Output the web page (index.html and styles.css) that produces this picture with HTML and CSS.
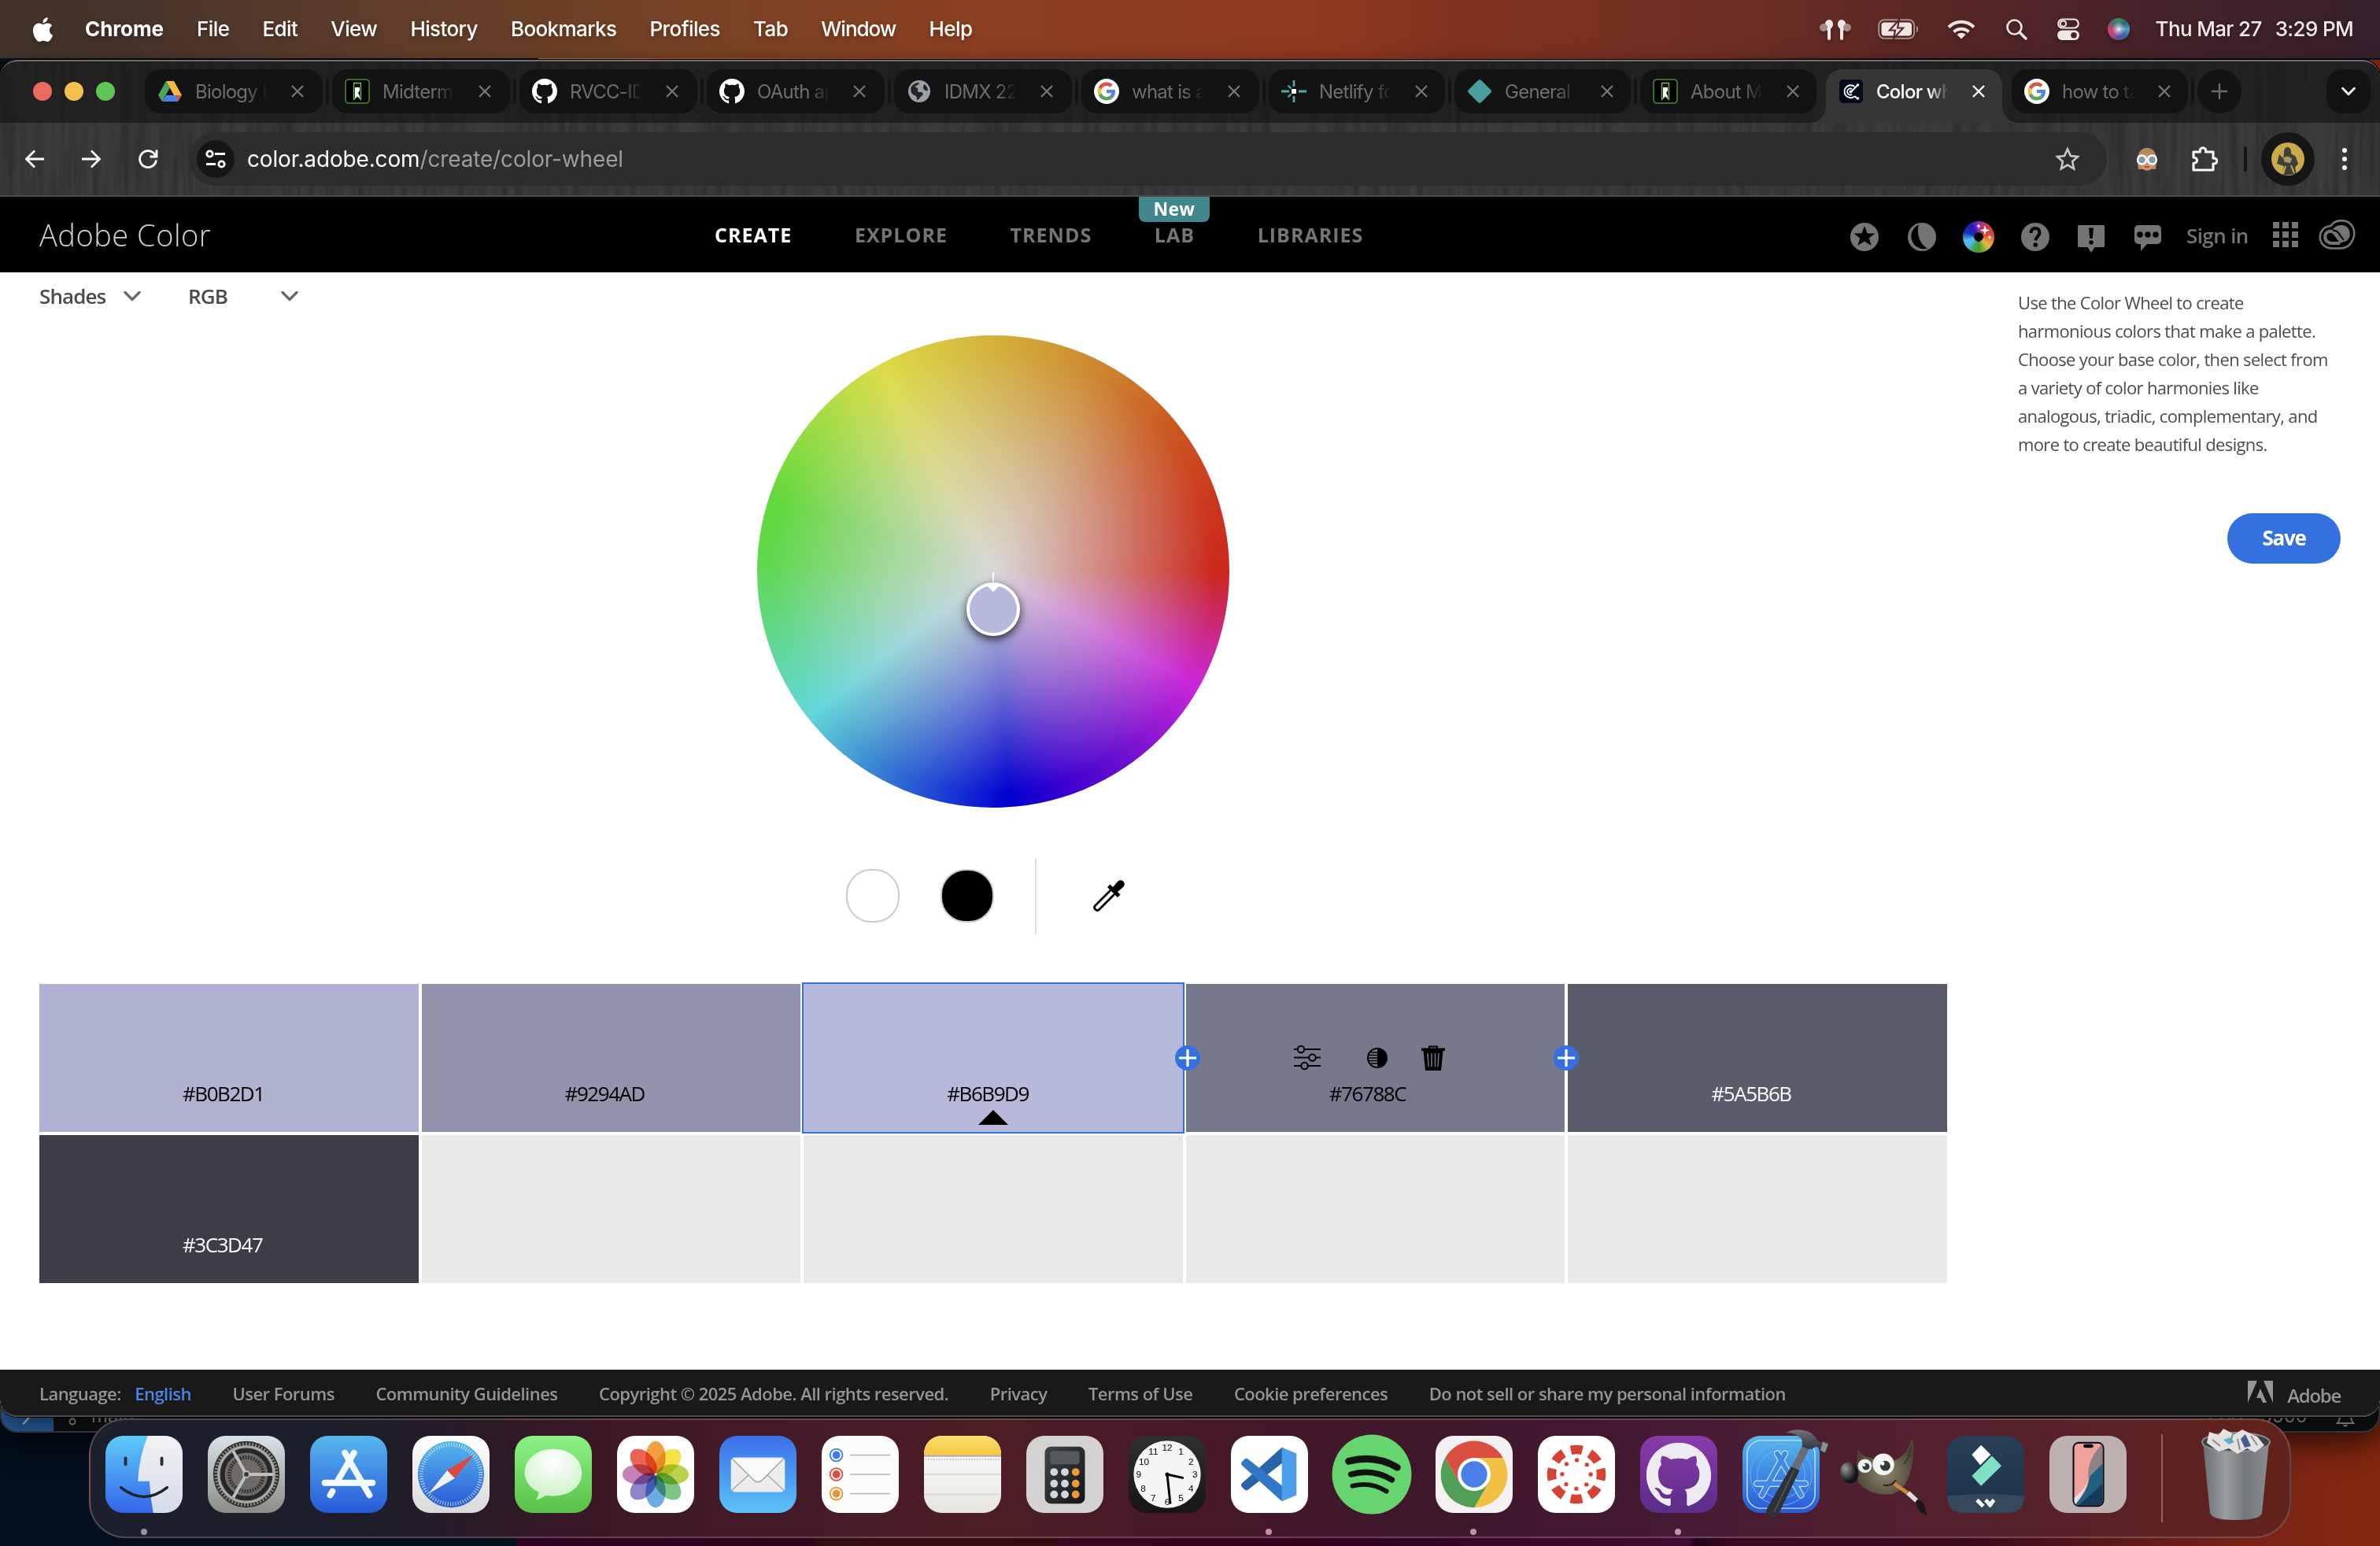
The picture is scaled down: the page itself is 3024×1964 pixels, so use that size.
FILE: index.html
```html
<!DOCTYPE html>
<html lang="en">
<head>
<meta charset="utf-8">
<title>Color wheel, a color palette generator | Adobe Color</title>
<link rel="stylesheet" href="styles.css">
</head>
<body>
<svg class="defs" width="0" height="0" aria-hidden="true">
  <defs>
    <filter id="grain" x="0" y="0" width="100%" height="100%">
      <feTurbulence type="fractalNoise" baseFrequency="0.11 0.006" numOctaves="3" seed="8"/>
      <feColorMatrix type="matrix" values="0 0 0 0 0  0 0 0 0 0  0 0 0 0 0  1.5 0 0 0 -0.55"/>
    </filter>
    <linearGradient id="gFinder" x1="0" y1="0" x2="0" y2="1"><stop offset="0" stop-color="#5ecbf9"/><stop offset="1" stop-color="#3265ea"/></linearGradient>
    <linearGradient id="gFace" x1="0" y1="0" x2="0" y2="1"><stop offset="0" stop-color="#f3f1f3"/><stop offset="1" stop-color="#d3dce8"/></linearGradient>
    <linearGradient id="gGear" x1="0" y1="0" x2="0" y2="1"><stop offset="0" stop-color="#d8e3e9"/><stop offset="1" stop-color="#8d8b85"/></linearGradient>
    <linearGradient id="gBlue" x1="0" y1="0" x2="0" y2="1"><stop offset="0" stop-color="#57b8ee"/><stop offset="1" stop-color="#2858d8"/></linearGradient>
    <linearGradient id="gMail" x1="0" y1="0" x2="0" y2="1"><stop offset="0" stop-color="#3a6fea"/><stop offset="1" stop-color="#5cc1f7"/></linearGradient>
    <linearGradient id="gGreen" x1="0" y1="0" x2="0" y2="1"><stop offset="0" stop-color="#8bf385"/><stop offset="1" stop-color="#58c147"/></linearGradient>
    <linearGradient id="gWhite" x1="0" y1="0" x2="0" y2="1"><stop offset="0" stop-color="#ffffff"/><stop offset="1" stop-color="#d9d9d9"/></linearGradient>
    <linearGradient id="gPaper" x1="0" y1="0" x2="0" y2="1"><stop offset="0" stop-color="#ffffff"/><stop offset="1" stop-color="#e5e4df"/></linearGradient>
    <linearGradient id="gYellow" x1="0" y1="0" x2="0" y2="1"><stop offset="0" stop-color="#fbdf71"/><stop offset="1" stop-color="#f6c53e"/></linearGradient>
    <linearGradient id="gDark" x1="0" y1="0" x2="0" y2="1"><stop offset="0" stop-color="#303030"/><stop offset="1" stop-color="#151516"/></linearGradient>
    <linearGradient id="gCalc" x1="0" y1="0" x2="1" y2="1"><stop offset="0" stop-color="#3e454a"/><stop offset="1" stop-color="#131517"/></linearGradient>
    <linearGradient id="gPurple" x1="0" y1="0" x2="0" y2="1"><stop offset="0" stop-color="#8a3aab"/><stop offset="1" stop-color="#5a2d88"/></linearGradient>
    <linearGradient id="gFilm" x1="0" y1="0" x2="0" y2="1"><stop offset="0" stop-color="#283f57"/><stop offset="1" stop-color="#1a3149"/></linearGradient>
    <linearGradient id="gCan" x1="0" y1="0" x2="1" y2="0"><stop offset="0" stop-color="#6c7072"/><stop offset=".35" stop-color="#9a9d9f"/><stop offset=".65" stop-color="#73777a"/><stop offset="1" stop-color="#8b8e90"/></linearGradient>
    <linearGradient id="gHead" x1="0" y1="0" x2="0" y2="1"><stop offset="0" stop-color="#70747b"/><stop offset="1" stop-color="#22242a"/></linearGradient>
    <radialGradient id="gBubble" cx=".5" cy=".25" r=".8"><stop offset="0" stop-color="#fff"/><stop offset="1" stop-color="#c9f0c2"/></radialGradient>
    <radialGradient id="gGimp" cx=".5" cy=".6" r=".55"><stop offset="0" stop-color="#8f866f"/><stop offset="1" stop-color="#4a4436"/></radialGradient>
    <radialGradient id="gNose" cx=".35" cy=".25" r=".6"><stop offset="0" stop-color="#9a9c9e"/><stop offset="1" stop-color="#141516"/></radialGradient>
    <symbol id="close" viewBox="0 0 20 20"><path d="M3 3l14 14M17 3L3 17" fill="none" stroke="currentColor" stroke-width="2.4"/></symbol>
    <symbol id="chevron" viewBox="0 0 22 14"><path d="M2 2.5l9 9 9-9" fill="none" stroke="currentColor" stroke-width="3.4" stroke-linecap="round" stroke-linejoin="round"/></symbol>
    <symbol id="octocat" viewBox="0 0 16 16"><path d="M8 0C3.58 0 0 3.58 0 8c0 3.54 2.29 6.53 5.47 7.59.4.07.55-.17.55-.38 0-.19-.01-.82-.01-1.49-2.01.37-2.53-.49-2.69-.94-.09-.23-.48-.94-.82-1.13-.28-.15-.68-.52-.01-.53.63-.01 1.08.58 1.23.82.72 1.21 1.87.87 2.33.66.07-.52.28-.87.51-1.07-1.78-.2-3.64-.89-3.64-3.95 0-.87.31-1.59.82-2.15-.08-.2-.36-1.02.08-2.12 0 0 .67-.21 2.2.82.64-.18 1.32-.27 2-.27s1.36.09 2 .27c1.53-1.04 2.2-.82 2.2-.82.44 1.1.16 1.92.08 2.12.51.56.82 1.27.82 2.15 0 3.07-1.87 3.75-3.65 3.95.29.25.54.73.54 1.48 0 1.07-.01 1.93-.01 2.2 0 .21.15.46.55.38A8.01 8.01 0 0 0 16 8c0-4.42-3.58-8-8-8z" fill="currentColor"/></symbol>
    <symbol id="google" viewBox="0 0 72 72"><circle cx="36" cy="36" r="36" fill="#fff"/><g transform="translate(10 10) scale(1.08)"><path fill="#de5246" d="M24 9.5c3.54 0 6.71 1.22 9.21 3.6l6.85-6.85C35.9 2.38 30.47 0 24 0 14.62 0 6.51 5.38 2.56 13.22l7.98 6.19C12.43 13.72 17.74 9.5 24 9.5z"/><path fill="#5186ec" d="M46.98 24.55c0-1.57-.15-3.09-.38-4.55H24v9.02h12.94c-.58 2.96-2.26 5.48-4.78 7.18l7.73 6c4.51-4.18 7.09-10.36 7.09-17.65z"/><path fill="#f1bd42" d="M10.53 28.59c-.48-1.45-.76-2.99-.76-4.59s.27-3.14.76-4.59l-7.98-6.19C.92 16.46 0 20.12 0 24c0 3.88.92 7.54 2.56 10.78l7.97-6.19z"/><path fill="#58a55c" d="M24 48c6.48 0 11.93-2.13 15.89-5.81l-7.73-6c-2.15 1.45-4.92 2.3-8.16 2.3-6.26 0-11.57-4.22-13.47-9.91l-7.98 6.19C6.51 42.62 14.62 48 24 48z"/></g></symbol>
    <symbol id="bookmark-r" viewBox="0 0 32 32"><rect x="1" y="1" width="30" height="30" rx="4" fill="#000" stroke="#4b8a28" stroke-width="1.6"/><path d="M11.500 5.500h9v21l-4.500-4.500-4.500 4.500z" fill="#111" stroke="#7dbb52" stroke-width="1.300"/><path d="M13 11h6v4l-2 3 2 4v3l-3-3-3 3z" fill="#fff"/></symbol>
    <symbol id="add" viewBox="0 0 32 32"><circle cx="16" cy="16" r="16" fill="#3570e0"/><path d="M16 5v22M5 16h22" stroke="#fff" stroke-width="3.2"/></symbol>
  </defs>
</svg>

<header class="menubar">
  <svg class="apple" viewBox="0 0 24 24" width="31" height="31"><path fill="#fff" d="M12.152 6.896c-.948 0-2.415-1.078-3.96-1.04-2.04.027-3.91 1.183-4.961 3.014-2.117 3.675-.546 9.103 1.519 12.09 1.013 1.454 2.208 3.09 3.792 3.039 1.52-.065 2.09-.987 3.935-.987 1.831 0 2.35.987 3.96.948 1.637-.026 2.676-1.48 3.676-2.948 1.156-1.688 1.636-3.325 1.662-3.415-.039-.013-3.182-1.221-3.22-4.857-.026-3.04 2.48-4.494 2.597-4.559-1.429-2.09-3.623-2.324-4.39-2.376-2-.156-3.675 1.09-4.61 1.09zM15.53 3.83c.843-1.012 1.4-2.427 1.245-3.83-1.207.052-2.662.805-3.532 1.818-.78.896-1.454 2.338-1.273 3.714 1.338.104 2.715-.688 3.559-1.701"/></svg>
  <nav class="menus"><b>Chrome</b><span>File</span><span>Edit</span><span>View</span><span>History</span><span>Bookmarks</span><span>Profiles</span><span>Tab</span><span class="m-window">Window</span><span>Help</span></nav>
  <div class="extras">
    <svg class="x-pods" viewBox="0 0 40 28" width="40" height="28"><g fill="#eee6e4"><path d="M8 4c4-4 9-2 9 4 0 3-2 4-3 6v12a2 2 0 0 1-4 0V16C6 13 6 8 8 4z"/><path d="M32 4c-4-4-9-2-9 4 0 3 2 4 3 6v12a2 2 0 0 0 4 0V16c4-3 4-8 2-12z"/></g><circle cx="5" cy="12" r="5" fill="#a58984"/><circle cx="35" cy="12" r="5" fill="#a58984"/></svg>
    <svg class="x-bat" viewBox="0 0 52 26" width="52" height="26"><rect x="1.2" y="1.2" width="45" height="23.6" rx="7" fill="none" stroke="#a58f8e" stroke-width="2"/><path d="M49 9c3 1 3 7 0 8z" fill="#a58f8e"/><rect x="4.500" y="4.500" width="38.500" height="17" rx="4" fill="#eee6e4"/><path d="M27 1L15 14.500h7L20 25l12-13.500h-7z" fill="#eee6e4" stroke="#5e2a28" stroke-width="2.200"/></svg>
    <svg class="x-wifi" viewBox="0 0 36 26" width="36" height="26" fill="none" stroke="#eee6e4" stroke-width="4"><path d="M2 10.500c9-9 23-9 32 0"/><path d="M8.500 16.500c5.500-5 13.500-5 19 0"/><path d="M18 25.500l-5.500-5.500c3-3 8-3 11 0z" fill="#eee6e4" stroke="none"/></svg>
    <svg class="x-find" viewBox="0 0 28 28" width="28" height="28" fill="none" stroke="#eee6e4"><circle cx="11.500" cy="11.500" r="9" stroke-width="2.600"/><path d="M18 18l8 8" stroke-width="3.400" stroke-linecap="round"/></svg>
    <svg class="x-cc" viewBox="0 0 28 28" width="28" height="28"><rect x="1.200" y="1.500" width="25.600" height="11" rx="5.500" fill="none" stroke="#eee6e4" stroke-width="2.200"/><circle cx="7.500" cy="7" r="3.600" fill="none" stroke="#eee6e4" stroke-width="2"/><rect x="0" y="15.500" width="28" height="12.500" rx="6.200" fill="#eee6e4"/><circle cx="21" cy="21.800" r="3.800" fill="#4b2326"/></svg>
    <span class="siri"></span>
    <span class="clock"><span>Thu Mar 27</span><span>3:29 PM</span></span>
  </div>
</header>
<div class="wallpaper-strip"></div>

<div class="editor-status">
  <span class="remote"><svg viewBox="0 0 24 24" width="28" height="28"><path d="M17 3L8 13" stroke="#b8cbe0" stroke-width="2"/></svg></span>
  <svg viewBox="0 0 20 30" width="20" height="30" fill="none" stroke="#888" stroke-width="2"><circle cx="8" cy="25" r="3.500"/><circle cx="15" cy="8" r="3.500"/><path d="M8 0v21M8 17c0-3 7-1 7-6"/></svg>
  <span class="branch">main</span>
  <span class="port">Port : 5500</span>
  <svg viewBox="0 0 24 24" width="24" height="24" fill="none" stroke="#999" stroke-width="2"><path d="M2 19c4-4 2-14 10-14s6 10 10 14z"/><path d="M10 21c1 2 3 2 4 0"/></svg>
</div>

<div class="window">
  <svg class="grain" width="3024" height="174"><rect width="3024" height="174" filter="url(#grain)"/></svg>
  <div class="tabstrip">
    <div class="lights"><i class="red"></i><i class="amber"></i><i class="green"></i></div>
    <div class="tab"><svg class="fav" viewBox="0 0 32 32"><path d="M11 3h10L31 21H21z" fill="#f5ba42"/><path d="M11 3L1 21l5 8 10-18z" fill="#4ca65a"/><path d="M11 21h20l-5 8H6z" fill="#4a80ea"/><path d="M24 21h7l-5 8z" fill="#dc5143"/></svg><span class="title">Biology La</span><svg class="x"><use href="#close"/></svg></div>
    <div class="tab"><svg class="fav"><use href="#bookmark-r"/></svg><span class="title">Midterm P</span><svg class="x"><use href="#close"/></svg></div>
    <div class="tab"><svg class="fav white"><use href="#octocat"/></svg><span class="title">RVCC-IDMX</span><svg class="x"><use href="#close"/></svg></div>
    <div class="tab"><svg class="fav white"><use href="#octocat"/></svg><span class="title">OAuth app</span><svg class="x"><use href="#close"/></svg></div>
    <div class="tab"><svg class="fav" viewBox="0 0 32 32"><circle cx="16" cy="16" r="14" fill="#9aa0a6"/><path d="M6 10c3-4 7-5 10-5-1 4-5 3-5 6 3 0 4 2 3 4s2 2 4 2c4 0 3 4 1 5s-3 5-6 5c0-3 0-5-3-6-4-1-6-7-4-11zM22 7c3 1 5 5 5 8-3 1-6-1-6-4 0-2 1-2 1-4z" fill="#252525"/></svg><span class="title">IDMX 225</span><svg class="x"><use href="#close"/></svg></div>
    <div class="tab"><svg class="fav"><use href="#google"/></svg><span class="title">what is a n</span><svg class="x"><use href="#close"/></svg></div>
    <div class="tab"><svg class="fav" viewBox="0 0 32 32" stroke="#4ea9ab" stroke-width="2.800"><path d="M16 2v8M16 22v8M0 16h10M22 16h10"/><path d="M8.500 8.500l4 4M8.500 23.500l4-4" stroke-width="2.200"/><rect x="13" y="13" width="6" height="6" rx="1" fill="#fff" stroke="none"/></svg><span class="title">Netlify for</span><svg class="x"><use href="#close"/></svg></div>
    <div class="tab"><svg class="fav" viewBox="0 0 32 32"><path d="M13.500 2.500q2.500-2.500 5 0l11.500 11.500q2 2 0 4L18.500 29.500q-2.500 2.500-5 0L2 18q-2-2 0-4z" fill="#489d9e"/></svg><span class="title">General | </span><svg class="x"><use href="#close"/></svg></div>
    <div class="tab"><svg class="fav"><use href="#bookmark-r"/></svg><span class="title">About Me</span><svg class="x"><use href="#close"/></svg></div>
    <div class="tab active"><svg class="fav" viewBox="0 0 32 32"><rect x="1" y="1" width="30" height="30" rx="5" fill="#020b1c"/><g fill="none" stroke="#fff" stroke-width="1.800"><path d="M20.500 10a8 8 0 1 0 0 12.500"/><path d="M16 16.500l8-8M20.500 22l3 3M17 13a4 4 0 1 0 0 7"/></g><circle cx="15.500" cy="16.500" r="2" fill="#fff"/><circle cx="24.500" cy="8" r="1.800" fill="#fff"/><circle cx="24.500" cy="25" r="1.800" fill="#fff"/></svg><span class="title">Color whee</span><svg class="x"><use href="#close"/></svg></div>
    <div class="tab"><svg class="fav"><use href="#google"/></svg><span class="title">how to tak</span><svg class="x"><use href="#close"/></svg></div>
    <span class="newtab"><svg viewBox="0 0 22 22" width="22" height="22"><path d="M11 1v20M1 11h20" stroke="#6b6b6b" stroke-width="2.400"/></svg></span>
    <span class="tablist"><svg width="18" height="12"><use href="#chevron"/></svg></span>
  </div>
  <div class="toolbar">
    <svg class="back" viewBox="0 0 26 26" width="26" height="26" fill="none" stroke="#fff" stroke-width="2.800"><path d="M25 13H3M13 2.500L2.500 13 13 23.500"/></svg>
    <svg class="fwd" viewBox="0 0 26 26" width="26" height="26" fill="none" stroke="#fff" stroke-width="2.800"><path d="M1 13h22M13 2.500L23.500 13 13 23.500"/></svg>
    <svg class="reload" viewBox="0 0 26 26" width="26" height="26" fill="none" stroke="#fff" stroke-width="2.800"><path d="M23.500 14.500A10.500 10.500 0 1 1 22 7.500L24 9.500"/><path d="M24 1.500v8.500h-8.500"/></svg>
    <div class="omnibox">
      <span class="site"><svg viewBox="0 0 26 24" width="26" height="24" fill="none" stroke="#fff" stroke-width="2.800"><circle cx="5.500" cy="5.500" r="3.700"/><path d="M12 5.500h13M1 18.500h12"/><circle cx="20.500" cy="18.500" r="3.700"/></svg></span>
      <span class="url"><b>color.adobe.com</b>/create/color-wheel</span>
      <svg class="star" viewBox="0 0 32 32" width="32" height="32"><path d="M16 3.500l3.900 8.600 9.100.9-6.900 6.200 2 9.200-8.100-4.800-8.100 4.800 2-9.200L3 13l9.100-.9z" fill="none" stroke="#c7c7c7" stroke-width="2.600"/></svg>
    </div>
    <svg class="ext-face" viewBox="0 0 30 30" width="30" height="30"><path d="M4 28C1 10 5 1 15 1s14 9 11 27z" fill="#b58a5a"/><ellipse cx="15" cy="18" rx="10" ry="11.500" fill="#cf9170"/><path d="M3 12C5 2 25 2 27 12L15 9z" fill="#b58a5a"/><circle cx="8.500" cy="16" r="5.500" fill="#7e9aa5" stroke="#fff" stroke-width="2.400"/><circle cx="21.500" cy="16" r="5.500" fill="#7e9aa5" stroke="#fff" stroke-width="2.400"/><path d="M12 25h6" stroke="#a33" stroke-width="1.500"/></svg>
    <svg class="puzzle" viewBox="0 0 34 34" width="34" height="34"><path d="M3 8h8.500c-1.500-7 8.500-7 7 0H28v8c6.500-1 6.500 8 0 7v8H3v-8.500c6-1 6-6.500 0-7.500z" fill="none" stroke="#fff" stroke-width="3" stroke-linejoin="round"/></svg>
    <i class="tool-sep"></i>
    <span class="profile"><svg viewBox="0 0 42 42" width="42" height="42"><circle cx="21" cy="21" r="21" fill="#c9a94a"/><path d="M14 42l2-12-9-3 3-12 5 5 1-6c-1-11 10-11 9 0l6 4 3 9-4 5 2 8z" fill="#40403a"/><path d="M15 20c4-4 9-2 11 1l-2 5-7-1z" fill="#a99a6a"/><path d="M18 30l-3 10M25 29l4 10" stroke="#c9a94a" stroke-width="2"/></svg></span>
    <svg class="kebab" viewBox="0 0 8 30" width="8" height="30" fill="#fff"><circle cx="4" cy="4" r="3"/><circle cx="4" cy="15" r="3"/><circle cx="4" cy="26" r="3"/></svg>
  </div>

  <div class="page">
    <header class="site-header">
      <span class="brand">Adobe Color</span>
      <nav class="nav"><span class="on">CREATE</span><span>EXPLORE</span><span>TRENDS</span><span class="lab">LAB<em>New</em></span><span>LIBRARIES</span></nav>
      <div class="tools">
        <svg class="t1" viewBox="0 0 36 36" width="36" height="36"><circle cx="18" cy="18" r="18" fill="#757575"/><path d="M18 4l3.600 9.500h9.900l-7.700 6 2.800 9.500-8.600-5.600-8.600 5.600 2.800-9.500-7.700-6h9.900z" fill="#000"/></svg>
        <svg class="t2" viewBox="0 0 36 36" width="36" height="36"><circle cx="18" cy="18" r="18" fill="#757575"/><path d="M14 2.500C11 12 14 27 25 32.500A16 16 0 0 1 14 2.500z" fill="#000"/></svg>
        <span class="disc"><svg viewBox="0 0 40 40" width="40" height="40" fill="#fff"><path d="M28 5l1.500 5 5 1.500-5 1.500-1.500 5-1.500-5-5-1.500 5-1.500zM20 3l.8 2.500 2.500.8-2.500.8L20 10l-.8-2.900-2.500-.8 2.500-.8zM34 17l.8 2.500 2.200.8-2.200.8L34 24l-.8-2.900-2.200-.8 2.200-.8z"/></svg></span>
        <svg class="t3" viewBox="0 0 36 36" width="36" height="36"><circle cx="18" cy="18" r="18" fill="#757575"/><path d="M12.500 13c0-8 11-8 11-.5 0 5-5 4.500-5 10" fill="none" stroke="#000" stroke-width="4"/><circle cx="18.300" cy="28" r="2.800" fill="#000"/></svg>
        <svg class="t4" viewBox="0 0 34 36" width="34" height="36"><path d="M1.500 1h31a1.500 1.500 0 0 1 1.500 1.500v25a1.500 1.500 0 0 1-1.500 1.500H21.500L17 36l-4.500-7H1.500A1.500 1.500 0 0 1 0 27.500v-25A1.500 1.500 0 0 1 1.500 1z" fill="#757575"/><path d="M14 4.500h6l-1.200 13.500h-3.600z" fill="#000"/><circle cx="17" cy="23" r="2.800" fill="#000"/></svg>
        <svg class="t5" viewBox="0 0 34 34" width="34" height="34"><path d="M5 1h24a5 5 0 0 1 5 5v14a5 5 0 0 1-5 5H16l-8 9v-9H5a5 5 0 0 1-5-5V6a5 5 0 0 1 5-5z" fill="#757575"/><circle cx="7" cy="13" r="3.800"/><circle cx="17" cy="13" r="3.800"/><circle cx="27" cy="13" r="3.800"/></svg>
        <span class="signin">Sign in</span>
        <svg class="t6" viewBox="0 0 32 32" width="32" height="32" fill="#757575"><path d="M0 0h8v8H0zM12 0h8v8h-8zM24 0h8v8h-8zM0 12h8v8H0zM12 12h8v8h-8zM24 12h8v8h-8zM0 24h8v8H0zM12 24h8v8h-8zM24 24h8v8h-8z"/></svg>
        <svg class="t7" viewBox="0 0 48 38" width="48" height="38" fill="none" stroke="#757575"><path d="M15.500 8C22-1.500 37-1 43 8.500c6 11-1 28-15.500 28H17C-3 36-3 9 15.500 8z" stroke-width="2.600"/><path d="M27 30H17C7 30 5 17 13.500 15c6-1 8 4 11 8l5 6" stroke-width="4.200"/><path d="M18 12C24 5 36 5 39 14c3 8-3 16-10 14-4-1-6-6-9-10z" fill="#757575" stroke="none"/><path d="M18 14c5-1 8 3 10 7l4 5" stroke="#000" stroke-width="2"/></svg>
      </div>
    </header>

    <main class="workspace">
      <section class="editor">
        <div class="filters"><span class="f-rule">Shades <svg width="22" height="14"><use href="#chevron"/></svg></span><span class="f-mode">RGB <svg width="22" height="14"><use href="#chevron"/></svg></span></div>
        <div class="wheel"><i class="spoke"></i><span class="handle"></span></div>
        <div class="controls">
          <i class="bg white-bg"></i><i class="bg black-bg"></i><i class="rule"></i>
          <svg class="dropper" viewBox="0 0 44 44" width="44" height="44"><path d="M24 15L4.500 34.500c-3 3 2 8 5 5L29 20" fill="#fff" stroke="#000" stroke-width="2.800"/><path d="M20 11l3.500-3.500 3.500 3.500 6-7c5-5 12 2 7 7l-7 6 3.500 3.500L33 24z" fill="#000"/></svg>
        </div>
        <div class="swatches">
          <div class="sw" style="background:#b0b2d1">#B0B2D1</div>
          <div class="sw" style="background:#9294ad">#9294AD</div>
          <div class="sw selected" style="background:#b6b9d9">#B6B9D9<i class="marker"></i></div>
          <div class="sw" style="background:#76788c">#76788C
            <svg class="add first" width="32" height="32"><use href="#add"/></svg>
            <span class="actions">
              <svg viewBox="0 0 34 32" width="34" height="32" fill="none" stroke="#000" stroke-width="2"><path d="M0 5h5M13 5h21M0 15.500h19M28 15.500h6M0 26h9M18 26h16"/><circle cx="9" cy="5" r="4.200"/><circle cx="23.500" cy="15.500" r="4.200"/><circle cx="13.500" cy="26" r="4.200"/></svg>
              <svg class="shade" viewBox="0 0 26 26" width="26" height="26"><circle cx="13" cy="13" r="12" fill="none" stroke="#000" stroke-width="2"/><path d="M13 1a12 12 0 0 1 0 24z"/><path d="M5 6h8M2 9.500h11M1 13h12M2 16.500h11M5 20h8" stroke="#000" stroke-width="1.600"/></svg>
              <svg class="bin" viewBox="0 0 30 32" width="30" height="32"><path d="M10 4V1.500h10V4" fill="none" stroke="#000" stroke-width="2"/><path d="M0 3.500h30V7H0zM2.500 7h25L25 32H5z"/><path d="M8 10l1 17M13 10v17M17.500 10v17M22 10l-1 17" stroke="#76788c" stroke-width="1.500"/></svg>
            </span>
          </div>
          <div class="sw light" style="background:#5a5b6b">#5A5B6B<svg class="add" width="32" height="32"><use href="#add"/></svg></div>
          <div class="sw light" style="background:#3c3d47">#3C3D47</div>
          <div class="sw empty"></div><div class="sw empty"></div><div class="sw empty"></div><div class="sw empty"></div>
        </div>
      </section>
      <aside class="side">
        <p>Use the Color Wheel to create<br>harmonious colors that make a palette.<br>Choose your base color, then select from<br>a variety of color harmonies like<br>analogous, triadic, complementary, and<br>more to create beautiful designs.</p>
        <button class="save">Save</button>
      </aside>
    </main>

    <footer class="footer">
      <span class="lang">Language:</span><span class="english">English</span><span>User Forums</span><span>Community Guidelines</span><span>Copyright © 2025 Adobe. All rights reserved.</span><span>Privacy</span><span>Terms of Use</span><span>Cookie preferences</span><span>Do not sell or share my personal information</span>
      <span class="adobe"><svg viewBox="0 0 32 28" width="32" height="28" fill="#959595"><path d="M0 0h12L0 28zM20 0h12v28zM16 10l8 18h-5l-2.500-6H11z"/></svg><span>Adobe</span></span>
    </footer>
  </div>
</div>

<div class="dock">
  <svg class="app" viewBox="0 0 100 100"><rect width="100" height="100" rx="23" fill="url(#gFinder)"/><path d="M55 0h22a23 23 0 0 1 23 23v54a23 23 0 0 1-23 23H62q-4-20-5-41H42Q44 25 55 0z" fill="url(#gFace)"/><path d="M26 29v8M73 29v8" stroke="#2c2f38" stroke-width="4" stroke-linecap="round"/><path d="M20 67q30 24 60 0" fill="none" stroke="#1f232b" stroke-width="3.500" stroke-linecap="round"/></svg>
  <svg class="app" viewBox="0 0 100 100"><rect width="100" height="100" rx="23" fill="url(#gGear)"/><circle cx="50" cy="50" r="43" fill="#2e2d2c"/><circle cx="50" cy="50" r="36" fill="none" stroke="#aaa" stroke-width="3.500"/><circle cx="50" cy="50" r="39.500" fill="none" stroke="#8b8b8b" stroke-width="4" stroke-dasharray="2 2.200"/><circle cx="50" cy="50" r="30" fill="#6d6a67" stroke="#262626" stroke-width="4"/><circle cx="50" cy="50" r="22" fill="none" stroke="#333" stroke-width="5" stroke-dasharray="2 1.500"/><path d="M50 50h35M50 50L33 20M50 50L33 80" stroke="#c0c0c0" stroke-width="4"/><circle cx="50" cy="50" r="4" fill="#3a3a3a" stroke="#bbb" stroke-width="2"/></svg>
  <svg class="app" viewBox="0 0 100 100"><rect width="100" height="100" rx="23" fill="url(#gBlue)"/><g stroke="#f4f8ff" stroke-width="8" stroke-linecap="round"><path d="M57 22L36 58M45 22l32 55M19 61h62M29 72l-3 5"/></g></svg>
  <svg class="app" viewBox="0 0 100 100"><rect width="100" height="100" rx="23" fill="url(#gWhite)"/><circle cx="50" cy="50" r="43" fill="url(#gBlue)"/><circle cx="50" cy="50" r="38.500" fill="none" stroke="#d7e9fb" stroke-width="5" stroke-dasharray=".9 2.460"/><path d="M80 24L55 55 45 45z" fill="#e0483c"/><path d="M21 75l24-30 10 10z" fill="#f2f2f4"/></svg>
  <svg class="app" viewBox="0 0 100 100"><rect width="100" height="100" rx="23" fill="url(#gGreen)"/><path d="M50 17c21 0 37 13 37 31S71 78 50 78c-4 0-7 0-10-1-3 3-8 5-13 6 3-3 4-7 4-10C20 68 13 59 13 48c0-18 16-31 37-31z" fill="url(#gBubble)"/></svg>
  <svg class="app petals" viewBox="0 0 100 100"><rect width="100" height="100" rx="23" fill="#fdfdfd"/><g opacity=".94"><ellipse cx="50" cy="28" rx="13" ry="21" fill="#f19a37"/><ellipse cx="50" cy="28" rx="13" ry="21" fill="#f3e03b" transform="rotate(45 50 50)"/><ellipse cx="50" cy="28" rx="13" ry="21" fill="#b4cf45" transform="rotate(90 50 50)"/><ellipse cx="50" cy="28" rx="13" ry="21" fill="#74c27c" transform="rotate(135 50 50)"/><ellipse cx="50" cy="28" rx="13" ry="21" fill="#66a6e2" transform="rotate(180 50 50)"/><ellipse cx="50" cy="28" rx="13" ry="21" fill="#8b7cc9" transform="rotate(225 50 50)"/><ellipse cx="50" cy="28" rx="13" ry="21" fill="#c27bb2" transform="rotate(270 50 50)"/><ellipse cx="50" cy="28" rx="13" ry="21" fill="#ec5a49" transform="rotate(315 50 50)"/></g></svg>
  <svg class="app" viewBox="0 0 100 100"><rect width="100" height="100" rx="23" fill="url(#gMail)"/><rect x="15" y="28" width="70" height="45" rx="5" fill="#ececec"/><path d="M16 71l26-24M84 71L58 47" stroke="#a9a9a9" stroke-width="1.500"/><path d="M17 30l27 27q6 6 12 0l27-27" fill="#f8f8f8" stroke="#a9a9a9" stroke-width="1.500"/></svg>
  <svg class="app" viewBox="0 0 100 100"><rect width="100" height="100" rx="23" fill="#fbfbfa"/><g stroke="#b5b5b7" stroke-width="1.600"><path d="M37 25h52M37 50h52M37 75h52"/></g><g stroke-width="1.800"><g fill="none"><circle cx="19" cy="25" r="8" stroke="#3d7cf0"/><circle cx="19" cy="50" r="8" stroke="#e34b3f"/><circle cx="19" cy="75" r="8" stroke="#eb9434"/></g><circle cx="19" cy="25" r="5" fill="#3d7cf0"/><circle cx="19" cy="50" r="5" fill="#e34b3f"/><circle cx="19" cy="75" r="5" fill="#eb9434"/></g></svg>
  <svg class="app" viewBox="0 0 100 100"><rect width="100" height="100" rx="23" fill="url(#gPaper)"/><path d="M0 25v-2A23 23 0 0 1 23 0h54a23 23 0 0 1 23 23v2z" fill="url(#gYellow)"/><path d="M0 26h100" stroke="#aaa49a" stroke-width="2"/><path d="M2 30.500h96" stroke="#aaa" stroke-width="1.500" stroke-dasharray="1.500 2"/><path d="M0 50h100M0 76h100" stroke="#d4d4d2" stroke-width="1.500"/></svg>
  <svg class="app" viewBox="0 0 100 100"><rect width="100" height="100" rx="23" fill="#d3d2d0"/><rect x="24" y="14" width="52" height="74" rx="8" fill="url(#gCalc)"/><rect x="31" y="20" width="38" height="17" rx="4" fill="#55595d"/><g fill="#d6d6d6"><circle cx="36" cy="47" r="5"/><circle cx="50" cy="47" r="5"/><circle cx="36" cy="62" r="5"/><circle cx="50" cy="62" r="5"/><circle cx="36" cy="76" r="5"/><circle cx="50" cy="76" r="5"/></g><g fill="#f09a37"><circle cx="64" cy="47" r="5"/><circle cx="64" cy="62" r="5"/><circle cx="64" cy="76" r="5"/></g></svg>
  <svg class="app" viewBox="0 0 100 100"><rect width="100" height="100" rx="23" fill="url(#gDark)"/><circle cx="50" cy="50" r="43.500" fill="#f5f5f7"/><g class="dial"><text x="50" y="19">12</text><text x="68" y="24.500">1</text><text x="81" y="37.500">2</text><text x="86" y="54.500">3</text><text x="81" y="72">4</text><text x="68" y="85">5</text><text x="50" y="89.500">6</text><text x="32" y="85">7</text><text x="19" y="72">8</text><text x="13" y="54.500">9</text><text x="20" y="37.500">10</text><text x="32" y="24.500">11</text></g><path d="M50 50l20 4.500M50 50l4 37" stroke="#000" stroke-width="3" stroke-linecap="round"/><circle cx="50" cy="50" r="2.600"/></svg>
  <svg class="app" viewBox="0 0 100 100"><rect width="100" height="100" rx="23" fill="#fff"/><path d="M66 15L14 62q-1.500 2 0 4l4 4q2 1.500 4 0L68 34z" fill="#2864a8"/><path d="M68 15L14 62l8 8 46-36z" fill="#2864a8"/><path d="M66 85L14 38q-1.500-2 0-4l4-4q2-1.500 4 0L68 66z" fill="#3277c6"/><path d="M66 15l19 8v54l-19 8z" fill="#4c9dec"/></svg>
  <svg class="app" viewBox="0 0 100 100"><circle cx="50" cy="50" r="51.500" fill="#66d46f"/><g fill="none" stroke="#101411" stroke-linecap="round"><path d="M20 33q34-9 63 8" stroke-width="9"/><path d="M23 50q28-8 53 7" stroke-width="7.500"/><path d="M25 65q24-6 44 7" stroke-width="6"/></g></svg>
  <svg class="app" viewBox="0 0 100 100"><rect width="100" height="100" rx="23" fill="#f4f1f2"/><path d="M50 50L12.500 28.500A43 43 0 0 1 87.500 28.500z" fill="#d95040"/><path d="M50 50l37.500-21.500A43 43 0 0 1 50 93z" fill="#f2c044"/><path d="M50 28.500h37.500L50 93l19-34z" fill="#f2c044"/><path d="M12.500 28.500A43 43 0 0 0 50 93l18.500-32L31 61z" fill="#519e56"/><path d="M12.500 28.500L31 61l10-12 9-20.500h37.500z" fill="#d95040"/><circle cx="50" cy="50" r="21.500" fill="#fff"/><circle cx="50" cy="50" r="17" fill="#4a7fe8"/></svg>
  <svg class="app" viewBox="0 0 100 100"><rect width="100" height="100" rx="23" fill="#fff"/><circle cx="50" cy="50" r="30" fill="none" stroke="#d64335" stroke-width="11" stroke-dasharray="14 9.560" stroke-dashoffset="7" transform="translate(-3.500 -3.500) scale(1.070)"/><circle cx="50" cy="50" r="18.500" fill="none" stroke="#d64335" stroke-width="5.500" stroke-dasharray="0 14.530" stroke-linecap="round"/></svg>
  <svg class="app" viewBox="0 0 100 100"><rect width="100" height="100" rx="23" fill="url(#gPurple)"/><g color="#ecebf1"><use href="#octocat" x="8" y="9" width="84" height="84"/></g></svg>
  <svg class="app" viewBox="0 0 100 100"><rect width="100" height="100" rx="23" fill="url(#gBlue)"/><rect x="6" y="6" width="88" height="88" rx="18" fill="none" stroke="#c2e2fb" stroke-width="1.500"/><circle cx="50" cy="50" r="40" fill="none" stroke="#6fb0f0" stroke-width="1"/><circle cx="50" cy="50" r="31" fill="none" stroke="#6fb0f0" stroke-width="1"/><g fill="none" stroke-linecap="round"><g stroke="#c9e4fc" stroke-width="8.500"><path d="M18.500 62h63"/><path d="M55 23L25 77"/><path d="M45 23l31 54"/></g><g stroke="#3f8ae6" stroke-width="6"><path d="M18.500 62h63"/><path d="M55 23L25 77"/><path d="M45 23l31 54"/></g></g><path d="M78 12l9 4-15 29-9-4z" fill="#686c73"/><path d="M63 40l11 5-27 56q-5 7-13 2-5-3-2-9z" fill="#2e3137"/><path d="M67 44L41 99" stroke="#4c5057" stroke-width="2"/><path d="M56-4q10-6 24-3 12 2 17 13l5 3 3-2 7 3-4 14-7-3-1-5-5-2-5 3q-5 1-13-3 2-9-4-13-7-5-17-5z" fill="url(#gHead)"/><path d="M104 8l7 3-4 11-6-3z" fill="#8c9097"/></svg>
  <svg class="app" viewBox="0 0 100 100"><path d="M17 17q4 8 11 10 20 8 38 4Q82 24 86 5q3-2 3 3 2 32-11 55Q68 77 54 76 30 76 17 60 14 38 17 17z" fill="url(#gGimp)"/><path d="M86 14q-2 14-9 22" stroke="#3b372c" stroke-width="2" fill="none"/><ellipse cx="6" cy="48" rx="11.500" ry="14" fill="url(#gNose)" transform="rotate(-18 6 48)"/><circle cx="26" cy="39" r="9" fill="#f0f0f0"/><circle cx="50" cy="37" r="14" fill="#f4f4f4"/><circle cx="27.500" cy="40" r="4.500" fill="#333a3c"/><circle cx="52.500" cy="39" r="6.500" fill="#333a3c"/><circle cx="25" cy="38" r="1.800" fill="#fff"/><circle cx="49" cy="36" r="2.500" fill="#fff"/><path d="M50 64q12 2 16-7" stroke="#2a251c" stroke-width="2" fill="none"/><path d="M64 62l20 14" stroke="#c88845" stroke-width="5"/><path d="M82 74l11 10" stroke="#dedede" stroke-width="6"/><path d="M93 83q10-1 13 20-15-5-13-20z" fill="#1b1817"/></svg>
  <svg class="app" viewBox="0 0 100 100"><rect width="100" height="100" rx="23" fill="url(#gFilm)"/><path d="M0 78q50-5 100 0Q100 100 77 100H23Q0 100 0 78z" fill="#34485c"/><path d="M44 12l12.500 12.500L43 38 32 24.500z" fill="#fff"/><path d="M58 26l12.500 13L44 65 32 52z" fill="#7fe0c4"/><path d="M37 85l3.500-3.500 8 8L45 93zM48 85l3.500-3.500 8 8L56 93zM59 81.500l3.500 3.500-7 8-3.500-3.500z" fill="#fff"/></svg>
  <svg class="app" viewBox="0 0 100 100"><rect width="100" height="100" rx="23" fill="#bdb1b1"/><rect x="30" y="8" width="41" height="84" rx="8" fill="#0e1319"/><clipPath id="screen"><rect x="32" y="10" width="37" height="80" rx="6"/></clipPath><g clip-path="url(#screen)"><rect x="32" y="10" width="37" height="80" fill="#f0a19b"/><path d="M69 10v26q-16 8-18 22-2 14-17 30V90h35z" fill="#1f5f80"/><path d="M69 10q-20 20-19 45l19-19z" fill="#8b8388"/><path d="M51 52q-2 16-19 28V90h1q16-20 18-38z" fill="#e6dde0"/><path d="M69 62L36 92h33z" fill="#143b5a"/></g><rect x="44" y="11" width="13" height="4.500" rx="2.200" fill="#000"/></svg>
  <i class="dock-sep"></i>
  <svg class="bin-full" viewBox="0 0 88 116" width="88" height="116"><path d="M2 16h84l-9 90q-2 9-33 9T11 106z" fill="url(#gCan)"/><ellipse cx="44" cy="16" rx="43" ry="12" fill="#3e4143" stroke="#8b8e90" stroke-width="2"/><path d="M7 17l3-14 12 4 6-8 14 7 10-6 10 5 9 4 9 11-12 9-10-5-12 7-11-7-13 4z" fill="#e4e2df"/><path d="M28 13l9-3 5 6-7 3z" fill="#54b4cf"/><path d="M50 12l6-6 7 15-8 2z" fill="#4a5a91"/><path d="M14 13l10 8M40 5l-3 12M63 8l8 12M46 12l3 14" stroke="#8e8a84" stroke-width="2"/></svg>
  <i class="dot d1"></i><i class="dot d2"></i><i class="dot d3"></i><i class="dot d4"></i>
</div>
</body>
</html>
```
FILE: styles.css
```css
* { box-sizing: border-box; }
body {
  position: relative;
  margin: 0;
  width: 3024px;
  height: 1964px;
  overflow: hidden;
  display: flex;
  flex-direction: column;
  font-family: Inter, "Liberation Sans", sans-serif;
  background: linear-gradient(90deg, #04101e 0, #04101e 655px, #300020 657px, #30001f 1030px, #330e10 1042px, #350c0e 1340px, #3a0622 1345px, #30001e 1700px, #3f0d31 2145px, #1f0216 2155px, #3b0a22 2200px, #3a0a1c 2500px, #7a2416 2860px, #84280f 3024px);
}
.defs { position: absolute; }
i { display: block; font-style: normal; }
svg { display: block; flex: none; }

/* macOS menu bar */
.menubar {
  height: 74px;
  flex: none;
  display: flex;
  align-items: center;
  padding-left: 39px;
  padding-right: 34px;
  color: #fff;
  font-size: 26px;
  font-weight: 500;
  background: linear-gradient(90deg, #43332b 0, #47342b 170px, #5b3b2b 420px, #784224 880px, #8b3f21 1250px, #8f3820 1700px, #80331f 1850px, #6e2e24 2200px, #562626 2500px, #42222a 2800px, #36202b 3024px);
}
.apple, .menus, .extras { filter: drop-shadow(0 3px 3px rgba(0, 0, 0, .3)); }
.apple { margin-right: 38px; }
.menus { display: flex; gap: 42.1px; letter-spacing: -0.6px; padding-bottom: 2px; }
.menus b { font-weight: 700; letter-spacing: -0.1px; }
.m-window { letter-spacing: -1px; }
.extras { margin-left: auto; display: flex; align-items: center; color: #f1eaea; }
.x-bat { margin-left: 34px; }
.x-wifi { margin-left: 36px; }
.x-find { margin-left: 38px; }
.x-cc { margin-left: 38px; }
.siri {
  width: 28px; height: 28px; border-radius: 50%; margin-left: 36px;
  background: radial-gradient(circle at 50% 50%, #f4eef8 0, rgba(220, 210, 240, .5) 22%, transparent 45%), conic-gradient(from 0deg, #3f8b6a, #2b6470, #4ba3c8, #2f64a8, #5a4ea0, #b04a82, #c8406a, #4b6b70, #3f8b6a);
}
.clock { display: flex; gap: 17px; margin-left: 33px; letter-spacing: -0.65px; padding-bottom: 2px; }
.wallpaper-strip {
  height: 2px; flex: none;
  background: linear-gradient(90deg, #031128 0, #031128 684px, #b6741f 684px, #a8441c 1150px, #9a2a1c 1800px, #7a2418 2150px, #2c1424 2300px, #05122a 2500px);
}

/* status bar of the editor window behind */
.editor-status {
  position: absolute; left: 0; top: 1770px; width: 3024px; height: 50px;
  border-radius: 0 0 22px 22px; overflow: hidden;
  display: flex; align-items: flex-start; padding-top: 15px;
  background: #0e0f10; border: 2px solid #3c3d40; border-top: 0;
  box-shadow: 0 14px 40px rgba(0, 0, 0, .6);
  color: #8f8f8f; font-size: 24px;
}
.remote { width: 66px; height: 60px; background: #265a9a; margin: -15px 16px 0 0; padding: 24px 0 0 18px; }
.editor-status > svg { margin-top: -4px; }
.branch { margin-left: 12px; margin-top: -1px; }
.port { margin-left: auto; margin-right: 36px; margin-top: -1px; }
.editor-status > svg:last-child { margin: 4px 30px 0 0; }

/* browser window */
.window {
  position: relative;
  height: 1724px; flex: none;
  display: flex; flex-direction: column;
  border-radius: 22px; overflow: hidden;
  background: #3b3b3b;
  box-shadow: 0 0 0 1px #000, 0 10px 30px rgba(0, 0, 0, .5);
}
.window::after {
  content: ""; position: absolute; inset: 0; border-radius: 22px;
  border: 2px solid rgba(150, 145, 142, .4); border-top-color: rgba(170, 163, 160, .6);
  border-left: 0; border-right: 0;
}
.grain { position: absolute; left: 0; top: 0; opacity: .32; }
.tabstrip {
  position: relative;
  height: 80px; flex: none;
  display: flex; gap: 12px;
  padding: 12px 12px 12px 42px;
  background: rgba(22, 22, 22, .68);
}
.lights { display: flex; gap: 16px; align-items: center; width: 130px; }
.lights i { width: 24px; height: 24px; border-radius: 50%; }
.red { background: #ed6a5f; } .amber { background: #f5bf50; } .green { background: #61c555; }
.tab {
  position: relative;
  width: 224px; height: 56px; flex: none;
  display: flex; align-items: center;
  padding-left: 16px;
  border-radius: 20px;
  background: rgba(14, 14, 14, .72);
  color: #6e6e6e;
  font-size: 24px;
}
.tab:nth-child(-n+7) { width: 226px; }
.tab:not(.active)::after { content: ""; position: absolute; right: -8px; top: 12px; width: 4px; height: 32px; border-radius: 2px; background: #141414; }
.tab:nth-child(10)::after { display: none; }
.fav { width: 32px; height: 32px; }
.white { color: #fff; }
.title {
  width: 98px; margin-left: 16px; white-space: nowrap; overflow: hidden; letter-spacing: -0.75px;
  -webkit-mask-image: linear-gradient(90deg, #000 68%, transparent 94%);
  mask-image: linear-gradient(90deg, #000 68%, transparent 94%);
}
.x { width: 20px; height: 20px; margin-left: 22px; color: #747474; }
.active { color: #fff; font-weight: 500; height: 68px; margin-bottom: -12px; padding-bottom: 12px; border-radius: 20px 20px 0 0; background: #363636; }
.active::before, .active::after {
  content: ""; position: absolute; bottom: 0; width: 20px; height: 20px;
}
.active::before { left: -20px; background: radial-gradient(circle at 0 0, transparent 19.500px, #363636 20px); }
.active::after { right: -20px; background: radial-gradient(circle at 100% 0, transparent 19.500px, #363636 20px); }
.active .x { color: #fff; }
.newtab, .tablist { width: 56px; height: 56px; border-radius: 28px; background: rgba(14, 14, 14, .72); display: flex; align-items: center; justify-content: center; color: #fff; }
.tablist { margin-left: auto; border-radius: 20px; }

.toolbar { position: relative; height: 94px; flex: none; display: flex; align-items: center; padding: 0 40px 0 31px; border-bottom: 2px solid #4b4b4b; }
.fwd { margin-left: 46px; }
.reload { margin-left: 46px; }
.omnibox { width: 2437px; height: 68px; margin-left: 39px; border-radius: 34px; background: #2d2d2d; display: flex; align-items: center; padding: 0 34px 0 10px; }
.site { width: 48px; height: 48px; border-radius: 50%; background: #161616; display: flex; align-items: center; justify-content: center; }
.url { margin-left: 16px; font-size: 28px; color: #9d9d9d; letter-spacing: -0.15px; }
.url b { font-weight: 400; color: #fff; }
.star { margin-left: auto; }
.ext-face { margin-left: 36px; }
.puzzle { margin-left: 41px; }
.tool-sep { width: 4px; height: 32px; background: #161616; margin-left: 33px; border-radius: 2px; }
.profile { width: 68px; height: 68px; border-radius: 50%; background: #161616; display: flex; align-items: center; justify-content: center; margin-left: 18px; }
.kebab { margin-left: 34px; }

/* Adobe Color */
.page { position: relative; flex: 1; display: flex; flex-direction: column; background: #fff; font-family: "Open Sans", "Noto Sans", sans-serif; }
.site-header { position: relative; height: 96px; flex: none; display: flex; align-items: center; background: #000; padding-left: 50px; padding-right: 30px; color: #d2d2d2; }
.brand { width: 858px; font-size: 38px; font-weight: 300; letter-spacing: .5px; }
.nav { display: flex; gap: 79.6px; font-size: 25px; font-weight: 700; letter-spacing: 1.02px; color: #757575; }
.on { color: #fff; }
.lab { position: relative; }
.lab em { position: absolute; left: -20px; top: -31px; width: 90px; height: 32px; border-radius: 0 0 8px 8px; background: #42868d; color: #fff; font-style: normal; font-size: 23px; line-height: 30px; text-align: center; letter-spacing: .3px; }
.tools { margin-left: auto; display: flex; align-items: center; color: #757575; padding-top: 6px; }
.t2 { margin-left: 37px; }
.disc { width: 40px; height: 40px; margin-left: 34px; border-radius: 50%; background: radial-gradient(circle, #000 0 5.500px, transparent 6px), conic-gradient(#8a2fc0, #c8384a 30deg, #e0453a 80deg, #e8933c 110deg, #d9c23f 135deg, #4d9a36 175deg, #47a04a 200deg, #4fb6e8 230deg, #59b9f2 255deg, #1430b0 290deg, #2a18b8 330deg, #8a2fc0); }
.t3 { margin-left: 34px; }
.t4 { margin-left: 36px; margin-top: 4px; }
.t5 { margin-left: 38px; margin-top: 2px; }
.signin { margin-left: 32px; width: 79px; font-size: 26px; font-weight: 600; letter-spacing: -.6px; white-space: nowrap; margin-top: -5px; }
.t6 { margin-left: 31px; margin-top: -6px; }
.t7 { margin-left: 26px; margin-top: -6px; }

.workspace { flex: 1; display: flex; padding-left: 50px; padding-right: 50px; }
.editor { width: 2424px; }
.filters { height: 60px; display: flex; align-items: center; font-size: 26px; font-weight: 650; letter-spacing: -0.9px; color: #4b4b4b; }
.filters span { display: flex; justify-content: space-between; align-items: center; }
.filters svg { color: #6a6a6a; }
.f-rule { width: 129px; }
.f-mode { width: 140px; margin-left: 60px; }
.wheel {
  position: relative; width: 600px; height: 600px; margin: 20px auto 0; border-radius: 50%;
  background:
    radial-gradient(circle closest-side, #d8d8d8 0, rgba(216, 216, 216, .5) 50%, rgba(216, 216, 216, 0) 94%),
    conic-gradient(#d4b13b 0deg, #cd8630 28deg, #cb5a22 50deg, #cb381d 72deg, #cb281b 90deg, #cb2888 106deg, #c928d8 119deg, #7612d0 142deg, #3a00d0 162deg, #0000d0 176deg, #1c40d4 193deg, #3880d2 210deg, #63d8d8 232deg, #60d890 252deg, #5fd84c 273deg, #62d83d 288deg, #98dc44 308deg, #dcdc49 331deg, #d4b13b 360deg);
}
.spoke { position: absolute; left: 299px; top: 301px; width: 2px; height: 14px; background: #fff; }
.handle { position: absolute; left: 266px; top: 314px; width: 68px; height: 68px; border-radius: 50%; border: 4px solid #fff; background: #b6b9d9; box-shadow: 0 4px 12px rgba(0, 0, 0, .75); }
.handle::before { content: ""; position: absolute; left: 22px; top: 0; border: 8px solid transparent; border-top-color: #fff; border-bottom: 0; }
.controls { height: 96px; margin-top: 64px; display: flex; align-items: center; padding-left: 1025px; }
.bg { width: 68px; height: 68px; border-radius: 32px; border: 2px solid #ccc; }
.black-bg { background: #000; margin-left: 52px; }
.rule { width: 2px; height: 96px; background: #ddd; margin-left: 52px; }
.dropper { margin-left: 70px; }
.swatches { margin-top: 64px; display: grid; grid-template-columns: repeat(5, 1fr); grid-auto-rows: 188px; gap: 4px; }
.sw { position: relative; padding: 120px 0 0 182px; font-size: 26px; letter-spacing: -1.45px; line-height: 38px; color: #000; white-space: nowrap; }
.light { color: #fff; }
.empty { background: #e9e9e9; }
.selected { outline: 2px solid #2f70e2; }
.marker { position: absolute; left: 222px; top: 160px; border: 19px solid transparent; border-bottom: 19px solid #000; border-top: 0; }
.add { position: absolute; left: -18px; top: 78px; z-index: 2; }
.first { left: -14px; }
.actions { position: absolute; left: 137px; top: 78px; display: flex; }
.shade { margin: 3px 0 0 59px; }
.bin { margin-left: 43px; }
.side { margin-left: 90px; width: 410px; display: flex; flex-direction: column; align-items: flex-end; }
.side p { width: 410px; margin: 20px 0 70px; font-size: 22px; line-height: 36px; letter-spacing: -0.65px; color: #4b4b4b; white-space: nowrap; }
.save { width: 144px; height: 64px; border: 0; border-radius: 32px; background: #3570e0; color: #fff; font: inherit; font-size: 26px; font-weight: 700; letter-spacing: -1.3px; padding-bottom: 4px; }

.footer { height: 60px; flex: none; background: #191919; display: flex; align-items: center; gap: 52.5px; padding: 0 50px; color: #959595; font-size: 22px; font-weight: 600; letter-spacing: -0.53px; white-space: nowrap; }
.lang { margin-right: -35px; }
.english { color: #4b85e6; }
.adobe { margin-left: auto; display: flex; align-items: center; gap: 18px; font-size: 24px; letter-spacing: -1.3px; padding-top: 5px; }
.adobe svg { margin-top: -9px; }

/* dock */
.dock {
  position: absolute; left: 113px; top: 1802px; width: 2798px; height: 152px;
  border-radius: 46px; border: 2px solid rgba(190, 160, 165, .32);
  display: flex; align-items: flex-start; gap: 32px; padding: 20px 0 0 19px;
  background: linear-gradient(90deg, #1c202c 0, #1e1e2b 350px, #2a1a26 500px, #3b1827 620px, #451a28 880px, #4c1e24 1150px, #47182a 1400px, #3e172a 1700px, #451a34 2000px, #52202f 2300px, #5a2227 2550px, #62221b 2798px);
}
.app { width: 98px; height: 98px; overflow: visible; }
.petals ellipse { mix-blend-mode: multiply; }
.dial { font: 500 12px "Liberation Sans", sans-serif; text-anchor: middle; }
.dock-sep { width: 2px; height: 112px; background: rgba(220, 160, 160, .5); margin: -2px 0 0 12px; }
.bin-full { margin: -8px 0 0 17px; overflow: visible; }
.dot { position: absolute; top: 138px; width: 8px; height: 8px; border-radius: 50%; background: #c48fab; }
.d1 { left: 64px; background: #9296a3; }
.d2 { left: 1493px; } .d3 { left: 1753px; } .d4 { left: 2013px; }
```
